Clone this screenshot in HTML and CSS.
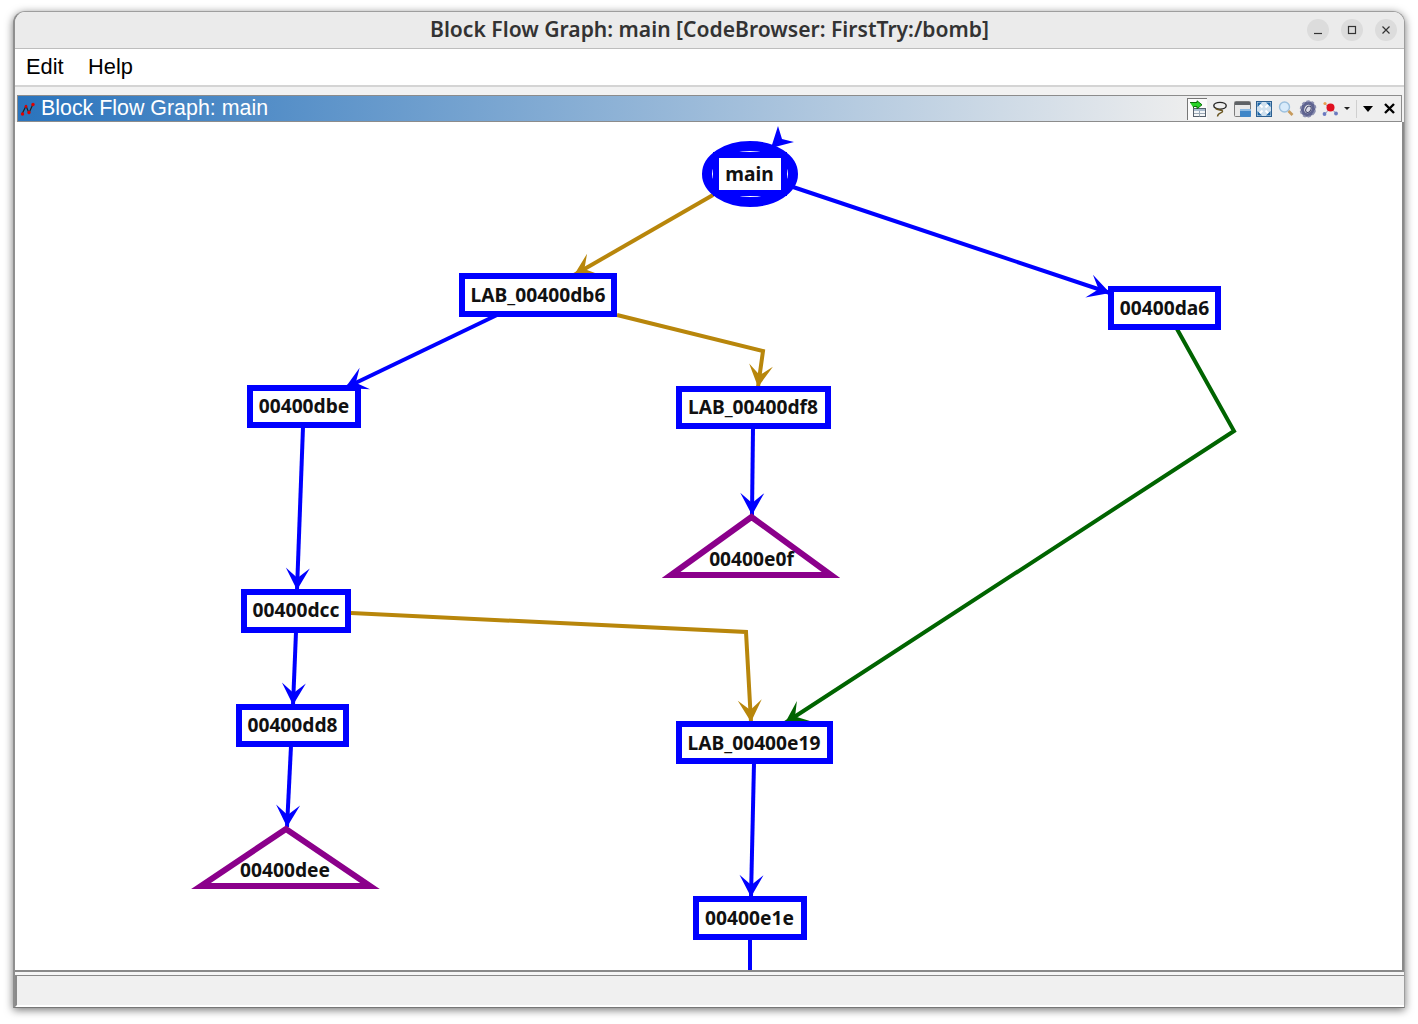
FILE: index.html
```html
<!DOCTYPE html>
<html lang="en">
<head>
    <meta charset="UTF-8">
    <title>Block Flow Graph: main</title>
    <link rel="stylesheet" href="styles.css">
</head>
<body>
    <div class="window">
        <div class="titlebar">
            <span class="title">Block Flow Graph: main [CodeBrowser: FirstTry:/bomb]</span>
            <div class="win-buttons">
                <span class="win-btn"><svg width="10" height="10" viewBox="0 0 10 10"><path d="M1 8.5h8" class="win-glyph"/></svg></span>
                <span class="win-btn"><svg width="10" height="10" viewBox="0 0 10 10"><rect x="1.5" y="1.5" width="7" height="7" class="win-glyph"/></svg></span>
                <span class="win-btn"><svg width="10" height="10" viewBox="0 0 10 10"><path d="M1.5 1.5l7 7M8.5 1.5l-7 7" class="win-glyph"/></svg></span>
            </div>
        </div>
        <div class="menubar">
            <span class="menu-item">Edit</span>
            <span class="menu-item">Help</span>
        </div>
        <div class="menu-rule"></div>
        <div class="panel">
            <div class="panel-head">
                <svg class="panel-icon" width="16" height="16" viewBox="0 0 16 16">
                    <path d="M2 13L6 5L9 12L13 3" fill="none" stroke="#222" stroke-width="1.2"/>
                    <circle cx="2.5" cy="13" r="1.7" fill="#e00000"/>
                    <circle cx="6" cy="5.5" r="1.4" fill="#e00000"/>
                    <circle cx="9" cy="11.5" r="1.7" fill="#e00000"/>
                    <circle cx="13" cy="3.5" r="1.7" fill="#e00000"/>
                </svg>
                <span class="panel-title">Block Flow Graph: main</span>
                <div class="tools">
                    <span class="tool tool-on">
                        <svg width="18" height="18" viewBox="0 0 18 18">
                            <rect x="4.5" y="8.5" width="12" height="8" fill="#f4f6f8" stroke="#56606c"/>
                            <rect x="5" y="9" width="11" height="2" fill="#a9bccf"/>
                            <path d="M5 13.5h11M10.5 11v5.5" stroke="#9aa8b6" fill="none"/>
                            <path d="M1 2.5H8V0.8L13 4.8L8 8.8V6.5H4.5V8" fill="#27d327" stroke="#0a6f0a"/>
                        </svg>
                    </span>
                    <span class="tool">
                        <svg width="16" height="16" viewBox="0 0 16 16">
                            <ellipse cx="8" cy="4.8" rx="6.2" ry="3.4" fill="none" stroke="#262626" stroke-width="1.4"/>
                            <path d="M3.5 7.5C6 9.5 11 8.5 10.5 10.5C10 12.5 6 11 5.5 15.5" fill="none" stroke="#6a5520" stroke-width="1.4"/>
                        </svg>
                    </span>
                    <span class="tool">
                        <svg width="17" height="16" viewBox="0 0 17 16">
                            <rect x="0.5" y="0.5" width="16" height="15" rx="1" fill="#e9e9e9" stroke="#7c7c7c"/>
                            <rect x="1" y="1" width="15" height="3" fill="#5f6266"/>
                            <rect x="6" y="8" width="11" height="8" rx="1" fill="#3f86c8"/>
                            <rect x="6" y="8" width="11" height="2" fill="#8dbbe4"/>
                        </svg>
                    </span>
                    <span class="tool">
                        <svg width="16" height="16" viewBox="0 0 16 16">
                            <rect x="0.5" y="0.5" width="15" height="15" fill="#cfe0ee" stroke="#2c5f90"/>
                            <path d="M2 2l4.5 4.5M14 2l-4.5 4.5M2 14l4.5-4.5M14 14l-4.5-4.5" stroke="#fff" stroke-width="1.8"/>
                            <path d="M1.5 1.5h4.5l-4.5 4.5zM14.5 1.5h-4.5l4.5 4.5zM1.5 14.5h4.5l-4.5-4.5zM14.5 14.5h-4.5l4.5-4.5z" fill="#1d66a8"/>
                        </svg>
                    </span>
                    <span class="tool">
                        <svg width="16" height="16" viewBox="0 0 16 16">
                            <circle cx="6.5" cy="6" r="5" fill="#d8ebfb" stroke="#9cc0de" stroke-width="1.4"/>
                            <path d="M10.5 10l4 4" stroke="#c79a5c" stroke-width="2.6"/>
                        </svg>
                    </span>
                    <span class="tool">
                        <svg width="18" height="18" viewBox="0 0 18 18">
                            <g transform="rotate(30 9 9)">
                                <ellipse cx="9" cy="9" rx="5.4" ry="6.2" fill="none" stroke="#5e6390" stroke-width="3.6"/>
                                <ellipse cx="9" cy="9" rx="7.2" ry="8" fill="none" stroke="#8a8eb0" stroke-width="1.8" stroke-dasharray="3 2"/>
                                <ellipse cx="9.5" cy="9" rx="2.4" ry="3.4" fill="#dcdce8" stroke="#44486e"/>
                            </g>
                        </svg>
                    </span>
                    <span class="tool tool-graph">
                        <svg width="16" height="16" viewBox="0 0 16 16">
                            <path d="M3 3L8 7M3 13L8 7M8 7L14 12" stroke="#9a9ab8" fill="none"/>
                            <circle cx="8.5" cy="6.5" r="4" fill="#e01020"/>
                            <circle cx="3" cy="2.5" r="1.6" fill="#e8a050"/>
                            <circle cx="2.5" cy="13" r="1.9" fill="#6a7ac0"/>
                            <circle cx="14" cy="12.5" r="1.9" fill="#6a7ac0"/>
                        </svg>
                    </span>
                    <span class="caret-small"></span>
                    <span class="tool-sep"></span>
                    <span class="caret"></span>
                    <svg class="tool-close" width="11" height="11" viewBox="0 0 11 11"><path d="M1 1l9 9M10 1l-9 9" stroke="#000" stroke-width="2.4"/></svg>
                </div>
            </div>
            <svg class="graph" width="1387" height="848" viewBox="15 122 1387 848">
                <defs>
                    <marker id="head-blue" markerUnits="userSpaceOnUse" markerWidth="26" markerHeight="28" refX="24" refY="13" orient="auto"><path d="M24 13L2 1L12 13L2 25Z" fill="#0000ff"/></marker>
                    <marker id="head-gold" markerUnits="userSpaceOnUse" markerWidth="26" markerHeight="28" refX="24" refY="13" orient="auto"><path d="M24 13L2 1L12 13L2 25Z" fill="#b8860b"/></marker>
                    <marker id="head-green" markerUnits="userSpaceOnUse" markerWidth="26" markerHeight="28" refX="24" refY="13" orient="auto"><path d="M24 13L2 1L12 13L2 25Z" fill="#006400"/></marker>
                </defs>

                <!-- edges -->
                <polyline class="edge edge-gold" points="713,195 574,275"/>
                <polyline class="edge edge-blue" points="793,187 1110,293"/>
                <polyline class="edge edge-blue" points="497,315 345,388"/>
                <polyline class="edge edge-gold" points="617,315 763,351 758,387"/>
                <polyline class="edge edge-blue" points="303,427 297,590"/>
                <polyline class="edge edge-blue" points="753,428 752,515"/>
                <polyline class="edge edge-green" points="1177,329 1234,431 785,723"/>
                <polyline class="edge edge-gold" points="351,613 746,632 751,722"/>
                <polyline class="edge edge-blue" points="296,632 293,705"/>
                <polyline class="edge edge-blue" points="291,746 287,827"/>
                <polyline class="edge edge-blue" points="754,763 751,897"/>
                <polyline class="edge edge-plain" points="750,939 750,970"/>

                <!-- main, entry node with its loop arrow -->
                <ellipse class="entry" cx="750" cy="174" rx="43" ry="28"/>
                <polygon class="loop-head" points="778,126 771,148 794,142 782,139"/>
                <rect class="node" x="716" y="155" width="68" height="38"/>
                <text class="label" x="749.5" y="180.5">main</text>

                <!-- blocks -->
                <rect class="node" x="462" y="276" width="152" height="38"/>
                <text class="label" x="538" y="302">LAB_00400db6</text>

                <rect class="node" x="1111" y="289" width="107" height="38"/>
                <text class="label" x="1164.5" y="315">00400da6</text>

                <rect class="node" x="250" y="388" width="108" height="37"/>
                <text class="label" x="304" y="413">00400dbe</text>

                <rect class="node" x="679" y="389" width="149" height="37"/>
                <text class="label" x="753" y="414">LAB_00400df8</text>

                <rect class="node" x="244" y="592" width="104" height="38"/>
                <text class="label" x="296" y="617">00400dcc</text>

                <rect class="node" x="239" y="707" width="107" height="37"/>
                <text class="label" x="292.5" y="732">00400dd8</text>

                <rect class="node" x="679" y="724" width="151" height="37"/>
                <text class="label" x="754" y="750">LAB_00400e19</text>

                <rect class="node" x="696" y="899" width="108" height="38"/>
                <text class="label" x="749.5" y="925">00400e1e</text>

                <!-- exits -->
                <polygon class="exit" points="751.5,517 671,575 831,575"/>
                <text class="label" x="751.5" y="566">00400e0f</text>

                <polygon class="exit" points="286,829 201,886 370,886"/>
                <text class="label" x="285" y="877">00400dee</text>
            </svg>
        </div>
        <div class="status-rule"></div>
        <div class="statusbar"></div>
    </div>
</body>
</html>
```

FILE: styles.css
```css
html, body {
    margin: 0;
    height: 100%;
    overflow: hidden;
    background-color: #fff;
}
.window {
    box-sizing: border-box;
    width: 1392px;
    height: 997px;
    margin: 11px 0 0 13px;
    display: flex;
    flex-direction: column;
    border: 1px solid #9e9e9e;
    border-left: 2px solid #8f8f8f;
    border-bottom: 1px solid #777;
    border-radius: 12px 12px 0 0;
    background: #fff;
    box-shadow: 0 2px 8px rgba(0, 0, 0, 0.55);
}
.titlebar {
    flex: 0 0 37px;
    position: relative;
    display: flex;
    align-items: center;
    justify-content: center;
    padding-bottom: 3px;
    box-sizing: border-box;
    background: #ebebeb;
    border-bottom: 1px solid #bdbdbd;
    border-radius: 11px 11px 0 0;
}
.title {
    font-family: "Noto Sans", sans-serif;
    font-weight: 600;
    font-size: 21.1px;
    color: #333;
}
.win-buttons {
    position: absolute;
    right: 7px;
    top: 7px;
    display: flex;
    gap: 12px;
}
.win-btn {
    width: 22px;
    height: 22px;
    border-radius: 50%;
    background: #dcdcdc;
    display: flex;
    align-items: center;
    justify-content: center;
}
.win-glyph {
    fill: none;
    stroke: #333;
    stroke-width: 1.2;
}
.menubar {
    flex: 0 0 36px;
    display: flex;
    align-items: center;
    gap: 24.5px;
    padding-left: 11px;
    background: #fff;
}
.menu-item {
    font-family: "Liberation Sans", sans-serif;
    font-size: 21.8px;
    color: #000;
}
.menu-rule {
    flex: 0 0 2px;
    background: #d4d4d4;
}
.panel {
    flex: 0 0 883px;
    display: flex;
    flex-direction: column;
    padding: 8px 0 0 0;
    box-sizing: border-box;
    background: #f2f2f2;
    min-height: 0;
}
.panel-head {
    box-sizing: border-box;
    flex: 0 0 27px;
    margin: 0 2px;
    display: flex;
    align-items: center;
    border: 1px solid #8c8c8c;
    background: linear-gradient(to right, #2a74bd, #eeeeee 85%);
}
.panel-icon {
    margin-left: 2px;
}
.panel-title {
    margin-left: 5px;
    font-family: "Liberation Sans", sans-serif;
    font-size: 21.4px;
    color: #fff;
}
.tools {
    margin-left: auto;
    height: 100%;
    display: flex;
    align-items: center;
    background: #eeeeee;
}
.tool {
    width: 22px;
    height: 22px;
    display: flex;
    align-items: center;
    justify-content: center;
}
.tool-on {
    width: 20px;
    background: #fbfbfb;
    border-left: 1px solid #777;
    border-top: 1px solid #777;
    box-sizing: border-box;
    margin-right: 2px;
}
.caret-small {
    width: 0;
    height: 0;
    margin-left: 3px;
    border-left: 3px solid transparent;
    border-right: 3px solid transparent;
    border-top: 3px solid #222;
}
.tool-sep {
    width: 1px;
    height: 18px;
    margin: 0 6px;
    background: #cfcfcf;
}
.caret {
    width: 0;
    height: 0;
    border-left: 5px solid transparent;
    border-right: 5px solid transparent;
    border-top: 6px solid #000;
}
.tool-close {
    margin: 0 6px 0 11px;
}
.graph {
    display: block;
    flex: 0 0 848px;
    background: #fff;
    border-right: 2px solid #8a8a8a;
}
.edge {
    fill: none;
    stroke-width: 4;
}
.edge-blue {
    stroke: #0000ff;
    marker-end: url(#head-blue);
}
.edge-gold {
    stroke: #b8860b;
    marker-end: url(#head-gold);
}
.edge-green {
    stroke: #006400;
    marker-end: url(#head-green);
}
.edge-plain {
    stroke: #0000ff;
}
.entry {
    fill: #fff;
    stroke: #0000ff;
    stroke-width: 10;
}
.loop-head {
    fill: #0000ff;
}
.node {
    fill: #fff;
    stroke: #0000ff;
    stroke-width: 6;
}
.exit {
    fill: #fff;
    stroke: #8b008b;
    stroke-width: 6;
}
.label {
    font-family: "Noto Sans", sans-serif;
    font-weight: 700;
    font-size: 19.2px;
    fill: #111;
    text-anchor: middle;
}
.status-rule {
    flex: 0 0 5px;
    box-sizing: border-box;
    background: #f6f6f6;
    border-top: 2px solid #8a8a8a;
}
.statusbar {
    flex: 1;
    box-sizing: border-box;
    background: #f0f0f0;
    border-top: 1px solid #8a8a8a;
    border-left: 2px solid #8a8a8a;
    border-bottom: 2px solid #fff;
}
```
